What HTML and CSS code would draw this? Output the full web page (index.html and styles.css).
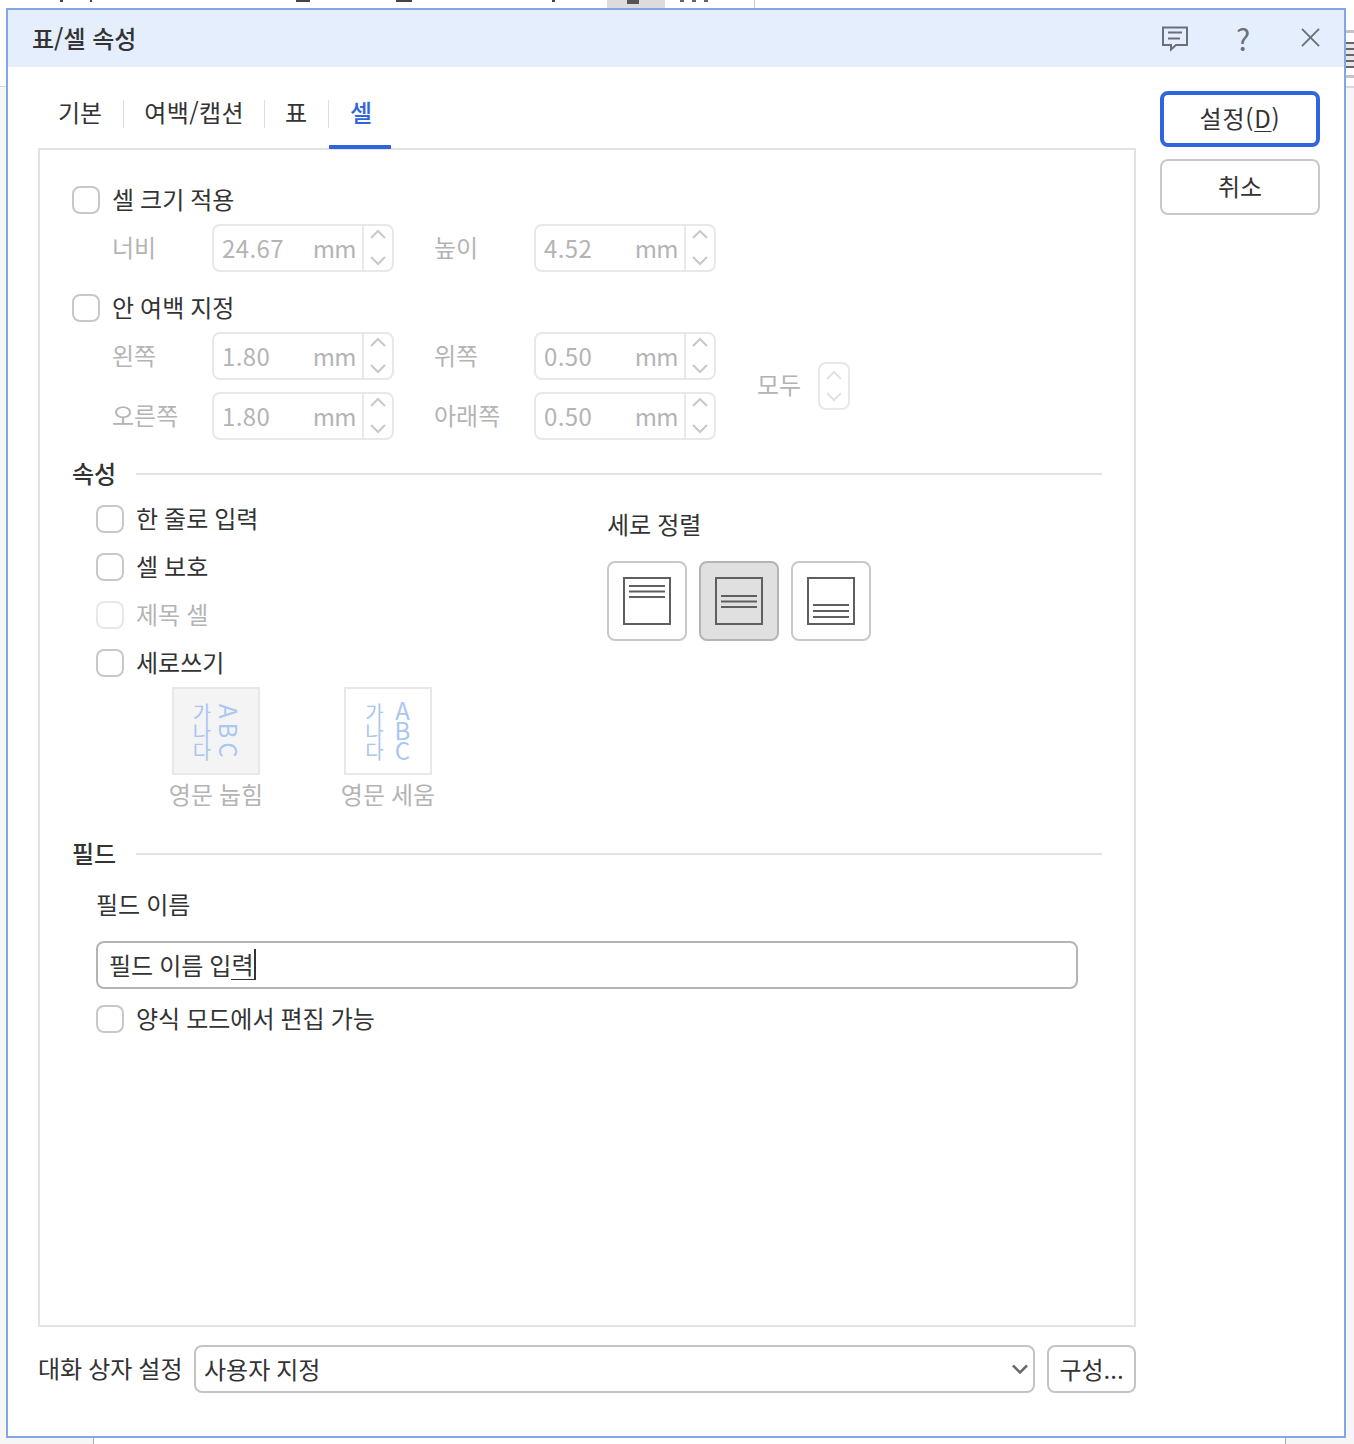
FILE: index.html
```html
<!DOCTYPE html>
<html lang="ko">
<head>
    <meta charset="UTF-8">
    <title>표/셀 속성</title>
    <link rel="stylesheet" href="styles.css">
</head>
<body>
    <!-- application behind the dialog -->
    <div class="bg-left"></div>
    <div class="bg-right"></div>
    <div class="bg-ruler"></div>
    <div class="bg-ticks"></div>
    <div class="bg-tool"></div>
    <div class="bg-tool2"></div>
    <div class="bg-foot-left"></div>
    <div class="bg-foot-right"></div>

    <div class="dialog">
        <div class="titlebar">
            <span class="title">표/셀 속성</span>
            <div class="title-icons">
                <svg class="icon-comment" width="28" height="26" viewBox="0 0 28 26" fill="none" stroke="#6b6f78" stroke-width="2">
                    <path d="M2 1.500H26V19H15L10 23.500V19H2Z"/>
                    <path d="M7 6.500H21M7 12.500H19"/>
                </svg>
                <span class="icon-help">?</span>
                <svg class="icon-close" width="19" height="19" viewBox="0 0 20 20" fill="none" stroke="#6b6f78" stroke-width="2">
                    <path d="M1 1L19 19M19 1L1 19"/>
                </svg>
            </div>
        </div>

        <div class="body">
            <div class="main">
                <div class="tabs">
                    <div class="tab">기본</div>
                    <div class="tab wide">여백/캡션</div>
                    <div class="tab">표</div>
                    <div class="tab active">셀</div>
                </div>

                <div class="panel">
                    <label class="check first"><span class="box"></span>셀 크기 적용</label>
                    <div class="fields size-fields">
                        <span class="field-label">너비</span>
                        <div class="num"><span class="val">24.67</span><span class="unit">mm</span><div class="spin"><svg width="16" height="10" viewBox="0 0 16 10"><path d="M1 9L8 2L15 9"/></svg><svg width="16" height="10" viewBox="0 0 16 10"><path d="M1 1L8 8L15 1"/></svg></div></div>
                        <span class="field-label second">높이</span>
                        <div class="num"><span class="val">4.52</span><span class="unit">mm</span><div class="spin"><svg width="16" height="10" viewBox="0 0 16 10"><path d="M1 9L8 2L15 9"/></svg><svg width="16" height="10" viewBox="0 0 16 10"><path d="M1 1L8 8L15 1"/></svg></div></div>
                    </div>

                    <label class="check margin-check"><span class="box"></span>안 여백 지정</label>
                    <div class="fields margin-fields">
                        <span class="field-label">왼쪽</span>
                        <div class="num"><span class="val">1.80</span><span class="unit">mm</span><div class="spin"><svg width="16" height="10" viewBox="0 0 16 10"><path d="M1 9L8 2L15 9"/></svg><svg width="16" height="10" viewBox="0 0 16 10"><path d="M1 1L8 8L15 1"/></svg></div></div>
                        <span class="field-label second">위쪽</span>
                        <div class="num"><span class="val">0.50</span><span class="unit">mm</span><div class="spin"><svg width="16" height="10" viewBox="0 0 16 10"><path d="M1 9L8 2L15 9"/></svg><svg width="16" height="10" viewBox="0 0 16 10"><path d="M1 1L8 8L15 1"/></svg></div></div>
                        <div class="all">
                            <span class="all-label">모두</span>
                            <div class="all-spin"><svg width="16" height="10" viewBox="0 0 16 10"><path d="M1 9L8 2L15 9"/></svg><svg width="16" height="10" viewBox="0 0 16 10"><path d="M1 1L8 8L15 1"/></svg></div>
                        </div>
                        <span class="field-label">오른쪽</span>
                        <div class="num"><span class="val">1.80</span><span class="unit">mm</span><div class="spin"><svg width="16" height="10" viewBox="0 0 16 10"><path d="M1 9L8 2L15 9"/></svg><svg width="16" height="10" viewBox="0 0 16 10"><path d="M1 1L8 8L15 1"/></svg></div></div>
                        <span class="field-label second">아래쪽</span>
                        <div class="num"><span class="val">0.50</span><span class="unit">mm</span><div class="spin"><svg width="16" height="10" viewBox="0 0 16 10"><path d="M1 9L8 2L15 9"/></svg><svg width="16" height="10" viewBox="0 0 16 10"><path d="M1 1L8 8L15 1"/></svg></div></div>
                    </div>

                    <div class="section attr-head"><span>속성</span><i></i></div>
                    <div class="attr">
                        <div class="attr-left">
                            <label class="check sub"><span class="box"></span>한 줄로 입력</label>
                            <label class="check sub"><span class="box"></span>셀 보호</label>
                            <label class="check sub disabled"><span class="box"></span>제목 셀</label>
                            <label class="check sub"><span class="box"></span>세로쓰기</label>
                            <div class="tiles">
                                <div class="tile-item">
                                    <div class="tile selected"><span class="tile-col">가나다</span><span class="tile-col latin">ABC</span></div>
                                    <span class="tile-label">영문 눕힘</span>
                                </div>
                                <div class="tile-item">
                                    <div class="tile upright"><span class="tile-col">가나다</span><span class="tile-col latin">ABC</span></div>
                                    <span class="tile-label">영문 세움</span>
                                </div>
                            </div>
                        </div>
                        <div class="attr-right">
                            <div class="valign-title">세로 정렬</div>
                            <div class="valign">
                                <div class="valign-btn"><svg width="48" height="48" viewBox="0 0 48 48" fill="none" stroke="#5f5f5f" stroke-width="2"><rect x="1" y="1" width="46" height="46"/><path d="M6 9H42M6 14.500H42M6 20H42"/></svg></div>
                                <div class="valign-btn on"><svg width="48" height="48" viewBox="0 0 48 48" fill="none" stroke="#5f5f5f" stroke-width="2"><rect x="1" y="1" width="46" height="46"/><path d="M6 19H42M6 24.500H42M6 30H42"/></svg></div>
                                <div class="valign-btn"><svg width="48" height="48" viewBox="0 0 48 48" fill="none" stroke="#5f5f5f" stroke-width="2"><rect x="1" y="1" width="46" height="46"/><path d="M6 28H42M6 34H42M6 40H42"/></svg></div>
                            </div>
                        </div>
                    </div>

                    <div class="section field-head"><span>필드</span><i></i></div>
                    <div class="field-name">필드 이름</div>
                    <div class="text-input">필드 이름 입<span class="composing">력</span></div>
                    <label class="check sub form-check"><span class="box"></span>양식 모드에서 편집 가능</label>
                </div>

                <div class="footer">
                    <span class="footer-label">대화 상자 설정</span>
                    <div class="select">
                        <span>사용자 지정</span>
                        <svg width="16" height="10" viewBox="0 0 16 10" fill="none" stroke="#6b6b6b" stroke-width="2.500"><path d="M1 1.500L8 8.500L15 1.500"/></svg>
                    </div>
                    <div class="config-btn">구성...</div>
                </div>
            </div>

            <div class="side">
                <div class="btn primary">설정(<u>D</u>)</div>
                <div class="btn">취소</div>
            </div>
        </div>
    </div>
</body>
</html>
```

FILE: styles.css
```css
* {
    box-sizing: border-box;
}

html, body {
    margin: 0;
    height: 100%;
}

body {
    position: relative;
    width: 1354px;
    height: 1444px;
    overflow: hidden;
    background: #fff;
    font-family: "Noto Sans CJK KR", "Noto Sans", sans-serif;
    font-size: 24px;
    word-spacing: -0.7px;
    color: #333;
}

/* window behind the dialog */
.bg-left {
    position: absolute;
    left: 0;
    top: 86px;
    width: 6px;
    height: 1358px;
    background: #f6f6f6;
    border-top: 1px solid #d8d8d8;
}

.bg-right {
    position: absolute;
    left: 1346px;
    top: 86px;
    width: 8px;
    height: 1358px;
    background: #f6f6f6;
    border-top: 2px solid #d8d8d8;
}

.bg-ruler {
    position: absolute;
    left: 1346px;
    top: 30px;
    width: 8px;
    height: 48px;
    border-top: 3px solid #c4c4c4;
    border-bottom: 3px solid #c4c4c4;
    background: repeating-linear-gradient(to bottom, #666 0, #666 2px, #e8e8e8 2px, #e8e8e8 6px) 0 9px / 100% 26px no-repeat;
}

.bg-ticks {
    position: absolute;
    left: 0;
    top: 0;
    width: 720px;
    height: 2px;
    background:
        linear-gradient(#444, #444) 60px 0 / 3px 2px no-repeat,
        linear-gradient(#444, #444) 90px 0 / 2px 2px no-repeat,
        linear-gradient(#444, #444) 296px 0 / 14px 2px no-repeat,
        linear-gradient(#444, #444) 396px 0 / 16px 2px no-repeat,
        linear-gradient(#444, #444) 552px 0 / 3px 2px no-repeat,
        linear-gradient(#666, #666) 680px 0 / 4px 2px no-repeat,
        linear-gradient(#666, #666) 692px 0 / 4px 2px no-repeat,
        linear-gradient(#666, #666) 704px 0 / 4px 2px no-repeat;
}

.bg-tool {
    position: absolute;
    left: 607px;
    top: 0;
    width: 58px;
    height: 8px;
    background: linear-gradient(#555, #555) 20px 0 / 12px 4px no-repeat, #dcdcdc;
}

.bg-tool2 {
    position: absolute;
    left: 665px;
    top: 0;
    width: 90px;
    height: 8px;
    border-right: 1px solid #ccc;
}

.bg-foot-left {
    position: absolute;
    left: 0;
    top: 1438px;
    width: 94px;
    height: 6px;
    background: #f6f6f6;
    border-right: 1px solid #aaa;
}

.bg-foot-right {
    position: absolute;
    left: 1285px;
    top: 1438px;
    width: 69px;
    height: 6px;
    background: #f6f6f6;
    border-left: 1px solid #aaa;
}

.dialog {
    position: absolute;
    left: 6px;
    top: 8px;
    width: 1340px;
    height: 1430px;
    background: #fff;
    border: 2px solid #85a6e6;
    display: flex;
    flex-direction: column;
}

.titlebar {
    height: 57px;
    flex: none;
    background: #e5eefc;
    display: flex;
    align-items: center;
    justify-content: space-between;
    padding: 0 24px 2px 24px;
}

.title {
    font-weight: 500;
    line-height: 34px;
    word-spacing: 0;
}

.title-icons {
    display: flex;
    align-items: center;
}

.icon-comment {
    margin-right: 44px;
    margin-top: 2px;
}

.icon-help {
    width: 20px;
    margin-right: 48px;
    font-size: 30px;
    line-height: 34px;
    color: #6b6f78;
    text-align: center;
}

.body {
    flex: 1;
    display: flex;
    min-height: 0;
}

.main {
    width: 1128px;
    padding-left: 30px;
    display: flex;
    flex-direction: column;
}

.side {
    padding: 24px 0 0 24px;
    display: flex;
    flex-direction: column;
    gap: 12px;
}

.btn {
    width: 160px;
    height: 56px;
    padding-bottom: 4px;
    border: 2px solid #c8c8c8;
    border-radius: 8px;
    display: flex;
    align-items: center;
    justify-content: center;
}

.btn.primary {
    border: 4px solid #2f66e0;
    letter-spacing: 0.8px;
}

.btn u {
    text-underline-offset: 3px;
    text-decoration-thickness: 1px;
}

.tabs {
    height: 82px;
    flex: none;
    display: flex;
    padding-top: 23px;
}

.tab {
    position: relative;
    height: 59px;
    padding: 0 21px;
    line-height: 44px;
}

.tab:not(:last-child)::after {
    content: "";
    position: absolute;
    right: -1px;
    top: 10px;
    height: 28px;
    width: 1px;
    background: #dedede;
}

.tab.wide {
    padding-right: 20px;
    letter-spacing: 0.4px;
}

.tab.active {
    margin-left: 1px;
    padding-right: 19px;
    color: #2f66e0;
    font-weight: 500;
    border-bottom: 4px solid #2f66e0;
}

.tab:first-child {
    padding-left: 20px;
}

.panel {
    height: 1179px;
    flex: none;
    margin-top: -1px;
    border: 2px solid #e2e2e2;
    padding: 0 32px;
}

.check {
    display: flex;
    align-items: center;
    gap: 12px;
    height: 34px;
    padding-bottom: 4px;
}

.check.first {
    margin-top: 33px;
}

.box {
    width: 28px;
    height: 28px;
    flex: none;
    margin-top: 4px;
    border: 2px solid #c8c8c8;
    border-radius: 8px;
}

.check.disabled {
    color: #b4b4b4;
}

.check.disabled .box {
    border-color: #e8e8e8;
}

.fields {
    display: grid;
    grid-template-columns: 100px 182px 140px 182px auto;
    align-items: center;
    row-gap: 12px;
    margin-left: 40px;
}

.size-fields {
    margin-top: 7px;
}

.margin-check {
    margin-top: 19px;
}

.margin-fields {
    margin-top: 7px;
}

.field-label {
    color: #b4b4b4;
    line-height: 34px;
    margin-top: -3px;
}

.field-label.second {
    padding-left: 40px;
}

.num {
    position: relative;
    height: 48px;
    border: 2px solid #e8e8e8;
    border-radius: 8px;
    display: flex;
    align-items: center;
    color: #b4b4b4;
    padding-left: 8px;
}

.val {
    flex: 1;
    padding-bottom: 2px;
    letter-spacing: 0.4px;
}

.unit {
    margin-right: 6px;
    padding-bottom: 2px;
    letter-spacing: -0.6px;
}

.spin {
    width: 30px;
    height: 100%;
    border-left: 2px solid #e8e8e8;
    display: flex;
    flex-direction: column;
    align-items: center;
    justify-content: space-between;
    padding: 3px 0 4px;
}

.spin svg, .all-spin svg {
    fill: none;
    stroke: #c8c8c8;
    stroke-width: 2;
}

.all {
    grid-column: 5;
    grid-row: 1 / span 2;
    display: flex;
    align-items: center;
    padding-left: 41px;
    color: #b4b4b4;
}

.all-label {
    width: 61px;
    line-height: 34px;
    margin-top: -4px;
}

.all-spin {
    width: 32px;
    height: 48px;
    border: 2px solid #e8e8e8;
    border-radius: 8px;
    display: flex;
    flex-direction: column;
    align-items: center;
    justify-content: space-between;
    padding: 6px 0;
}

.all-spin svg {
    stroke: #e2e2e2;
}

.section {
    display: flex;
    align-items: center;
    height: 34px;
}

.section span {
    font-weight: 500;
    width: 64px;
    flex: none;
    margin-top: -4px;
}

.section i {
    flex: 1;
    height: 2px;
    background: #e2e2e2;
}

.attr-head {
    margin-top: 17px;
}

.attr {
    display: flex;
}

.attr-left {
    width: 535px;
    padding-left: 24px;
    padding-top: 11px;
}

.check.sub {
    margin-bottom: 14px;
}

.tiles {
    display: flex;
    gap: 84px;
    margin-left: 76px;
    margin-top: -7px;
}

.tile-item {
    width: 88px;
    display: flex;
    flex-direction: column;
    align-items: center;
}

.tile {
    width: 88px;
    height: 88px;
    border: 2px solid #e8e8e8;
    display: flex;
    align-items: center;
    justify-content: center;
    gap: 3px;
    padding-right: 2px;
    color: #aac6f2;
    font-size: 20px;
}

.tile.selected {
    background: #f4f4f4;
}

.tile.upright {
    gap: 4px;
    padding-right: 0;
}

.tile-col {
    writing-mode: vertical-rl;
    line-height: 24px;
    letter-spacing: -1px;
    white-space: nowrap;
}

.tile-col.latin {
    padding-top: 4px;
    font-size: 24px;
    letter-spacing: 4px;
}

.tile.upright .tile-col.latin {
    padding: 0 0 4px;
    text-orientation: upright;
    letter-spacing: -4px;
}

.tile-label {
    color: #b4b4b4;
    white-space: nowrap;
    line-height: 34px;
    margin-top: 2px;
}

.attr-right {
    padding-top: 16px;
}

.valign-title {
    line-height: 34px;
}

.valign {
    display: flex;
    gap: 12px;
    margin-top: 20px;
}

.valign-btn {
    width: 80px;
    height: 80px;
    border: 2px solid #c8c8c8;
    border-radius: 8px;
    display: flex;
    align-items: center;
    justify-content: center;
}

.valign-btn.on {
    background: #e0e0e0;
    border-color: #b4b4b4;
}

.field-head {
    margin-top: 26px;
}

.field-name {
    margin: 16px 0 0 24px;
    line-height: 34px;
}

.text-input {
    width: 982px;
    height: 48px;
    margin: 20px 0 0 24px;
    border: 2px solid #b4b4b4;
    border-radius: 8px;
    padding: 0 0 2px 11px;
    display: flex;
    align-items: center;
    white-space: pre;
}

.composing {
    border-bottom: 1px solid #333;
    border-right: 2px solid #333;
    line-height: 30px;
}

.form-check {
    margin: 13px 0 0 24px;
}

.footer {
    flex: none;
    display: flex;
    align-items: center;
    margin-top: 18px;
    height: 48px;
}

.footer-label {
    width: 156px;
    flex: none;
    padding-bottom: 3px;
    white-space: nowrap;
}

.select {
    width: 841px;
    height: 48px;
    border: 2px solid #c4c4c4;
    border-radius: 8px;
    padding: 0 5px 2px 8px;
    display: flex;
    align-items: center;
    justify-content: space-between;
}

.select svg {
    margin-top: 2px;
}

.config-btn {
    width: 89px;
    height: 48px;
    margin-left: 12px;
    padding-bottom: 2px;
    border: 2px solid #c4c4c4;
    border-radius: 8px;
    display: flex;
    align-items: center;
    justify-content: center;
}
```
